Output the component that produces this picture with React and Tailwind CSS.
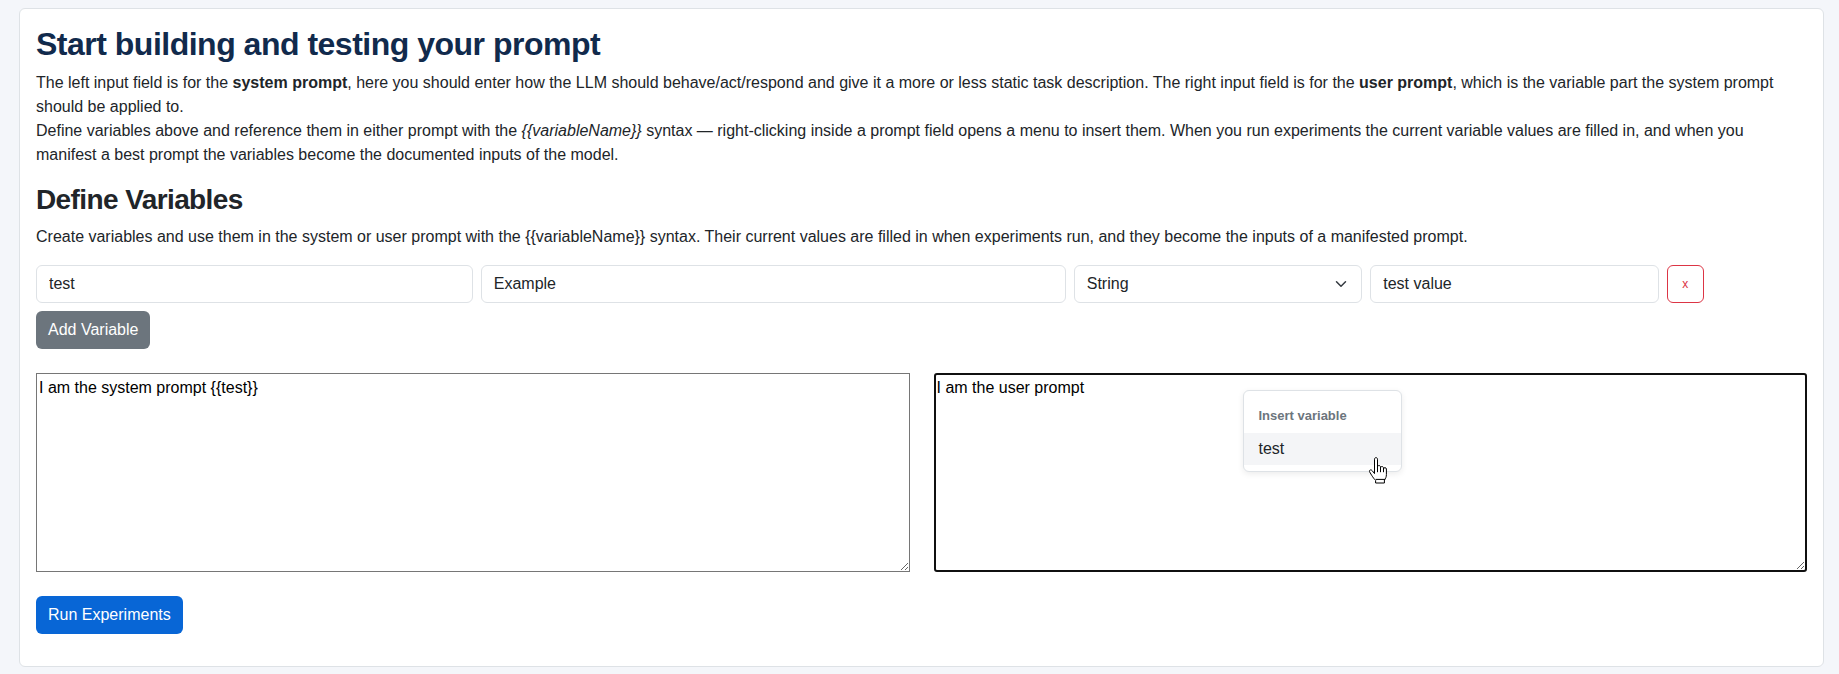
const font = { fontFamily: '"Liberation Sans", Arial, sans-serif' };

function HandCursor() {
  return (
    <svg width="20" height="27" viewBox="0 0 20 27" className="absolute left-[434px] top-[84px]">
      <path
        d="M6.5 2.2C6.5 1.3 7.2.6 8 .6s1.5.7 1.5 1.6V10c0-.8.7-1.5 1.5-1.5s1.5.7 1.5 1.5v1c0-.8.7-1.5 1.5-1.5s1.5.7 1.5 1.5v1c0-.8.7-1.4 1.4-1.4.8 0 1.5.6 1.5 1.4v5.6c0 2.3-.8 4-2 5.4v3H7.6v-2.6c-1.3-1.2-2.6-3-4-5.2L1.7 15c-.5-.8-.3-1.7.5-2 .7-.3 1.4 0 1.9.6L6.5 16.6Z"
        fill="#fff"
        stroke="#000"
        strokeWidth="1"
        strokeLinejoin="round"
      />
      <path d="M9.5 10v5.2M12.5 11v4.2M15.5 12v3.2M7.6 22.4h9.6" stroke="#000" strokeWidth="1" fill="none" />
    </svg>
  );
}

function VariableRow() {
  const field =
    "w-full h-[38px] border border-[#dee2e6] rounded-[6px] px-3 text-[16px] text-[#212529] bg-white outline-none";
  return (
    <div className="grid grid-cols-12 gap-x-2 mt-4">
      <div className="col-span-3">
        <input readOnly value="test" className={field} style={font} />
      </div>
      <div className="col-span-4">
        <input readOnly value="Example" className={field} style={font} />
      </div>
      <div className="col-span-2 relative">
        <select defaultValue="String" className={`${field} appearance-none`} style={font}>
          <option>String</option>
          <option>Number</option>
          <option>Boolean</option>
        </select>
        <svg
          width="12"
          height="12"
          viewBox="0 0 16 16"
          className="absolute right-[15px] top-[13px] pointer-events-none"
        >
          <path d="m2 5 6 6 6-6" fill="none" stroke="#343a40" strokeWidth="2" strokeLinecap="round" strokeLinejoin="round" />
        </svg>
      </div>
      <div className="col-span-2">
        <input readOnly value="test value" className={field} style={font} />
      </div>
      <div className="col-span-1">
        <button
          type="button"
          className="w-[37px] h-[38px] border border-[#dc3545] rounded-[6px] text-[#dc3545] text-[12px] bg-white"
          style={font}
        >
          x
        </button>
      </div>
    </div>
  );
}

export default function App() {
  return (
    <div className="bg-[#f4f6fa] min-h-[674px] pl-[19px] pr-[15px] py-2 text-[#212529]" style={font}>
      <div className="bg-white border border-[#dee2e6] rounded-[6px] px-4 pt-4 pb-4">
        <h1 className="text-[32px] leading-[38px] font-bold text-[#112a4c] mb-2 tracking-[-0.5px]">
          Start building and testing your prompt
        </h1>
        <p className="text-[16px] leading-[24px] mb-4">
          The left input field is for the <b>system prompt</b>, here you should enter how the LLM should behave/act/respond and give it a more or less static task description. The right input field is for the <b>user prompt</b>, which is the variable part the system prompt should be applied to.
          <br />
          Define variables above and reference them in either prompt with the <i>{"{{variableName}}"}</i> syntax — right-clicking inside a prompt field opens a menu to insert them. When you run experiments the current variable values are filled in, and when you manifest a best prompt the variables become the documented inputs of the model.
        </p>

        <h2 className="text-[28px] leading-[34px] font-bold mb-2 tracking-[-0.6px]">Define Variables</h2>
        <p className="text-[16px] leading-[24px]">
          Create variables and use them in the system or user prompt with the {"{{variableName}}"} syntax. Their current values are filled in when experiments run, and they become the inputs of a manifested prompt.
        </p>

        <VariableRow />

        <button
          type="button"
          className="mt-2 h-[38px] px-3 rounded-[6px] bg-[#6c757d] text-white text-[16px]"
          style={font}
        >
          Add Variable
        </button>

        <div className="grid grid-cols-2 gap-x-6 mt-6">
          <textarea
            readOnly
            value="I am the system prompt {{test}}"
            className="block w-full h-[199px] border border-[#767676] p-[2px] text-[16px] leading-[24px] text-black outline-none"
            style={font}
          />
          <div className="relative">
            <textarea
              readOnly
              value="I am the user prompt"
              className="block w-full h-[199px] border-2 border-[#101010] rounded-[3px] p-[1px] text-[16px] leading-[24px] text-black outline-none"
              style={font}
            />
            <div className="absolute left-[309px] top-[17px] w-[159px] bg-white border border-[#dee2e6] rounded-[6px] shadow-[0_2px_6px_rgba(0,0,0,0.08)] pt-2 pb-[6px]">
              <div className="px-[15px] py-2 text-[13px] leading-[18px] font-bold text-[#6c757d]">Insert variable</div>
              <div className="px-[15px] py-1 text-[16px] leading-[24px] bg-[#f4f5f7] text-[#212529]">test</div>
            </div>
            <HandCursor />
          </div>
        </div>

        <button
          type="button"
          className="mt-6 mb-4 h-[38px] px-3 rounded-[6px] bg-[#0866d6] text-white text-[16px]"
          style={font}
        >
          Run Experiments
        </button>
      </div>
    </div>
  );
}
